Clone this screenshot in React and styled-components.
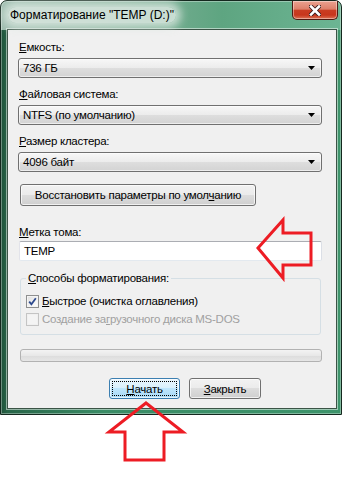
import styled, { createGlobalStyle } from 'styled-components';

const GlobalStyle = createGlobalStyle`
  html, body {
    margin: 0;
    padding: 0;
    background: #fff;
  }
  body {
    font-family: "Liberation Sans", Arial, sans-serif;
    font-size: 12px;
    color: #000;
  }
`;

const Page = styled.div`
  position: relative;
  width: 344px;
  height: 480px;
  overflow: hidden;
`;

const Window = styled.div`
  width: 342px;
  box-sizing: border-box;
  border: 1px solid #14281e;
  border-radius: 7px 7px 0 0;
  padding: 0 4px 5px 6px;
  background:
    linear-gradient(to right, #9dbcae 0%, #82b099 35%, #5ea581 65%, #6cb593 100%) 0 0 / 100% 29px no-repeat,
    linear-gradient(to right, #1f523a 0, #286548 7px, #3a8c66 30%, #3d946b 100%);
  box-shadow: inset 0 0 0 1px rgba(255, 255, 255, 0.35);
`;

const TitleBar = styled.div`
  height: 28px;
  display: flex;
  align-items: flex-start;
`;

const Title = styled.span`
  align-self: center;
  margin-left: 1px;
  padding: 0 2px;
  line-height: 16px;
  color: #000;
  border-radius: 8px;
  background: rgba(222, 234, 228, 0.8);
  box-shadow: 0 0 8px 5px rgba(222, 234, 228, 0.8);
`;

const CloseButton = styled.div`
  margin-left: auto;
  margin-right: -1px;
  width: 46px;
  height: 19px;
  box-sizing: border-box;
  border: 1px solid #4e1a12;
  border-top: none;
  border-radius: 0 0 5px 5px;
  background: linear-gradient(#eaa290 0%, #dd806a 45%, #c93d22 52%, #c7361c 78%, #dc7255 100%);
  box-shadow: inset 0 0 0 1px rgba(255, 255, 255, 0.4);
  display: flex;
  align-items: center;
  justify-content: center;
`;

const Client = styled.div`
  background: #f0f0f0;
  border: 1px solid #3b5446;
  box-shadow: 0 0 0 1px rgba(255, 255, 255, 0.5);
  padding: 10px 14px 9px 10px;
  display: flex;
  flex-direction: column;
  font-size: 11.5px;
  letter-spacing: -0.25px;
`;

const Field = styled.div`
  display: flex;
  flex-direction: column;
  margin-top: ${p => p.$top || 0}px;
`;

const Label = styled.div`
  line-height: 15px;
  padding-left: 1px;
  margin-bottom: ${p => p.$gap ?? 3}px;
`;

const Key = styled.span`
  text-decoration: underline;
`;

const Combo = styled.div`
  height: 20px;
  box-sizing: border-box;
  border: 1px solid #707070;
  border-radius: 3px;
  background: linear-gradient(#f7f7f7 0%, #ececec 49%, #dedede 50%, #d3d3d3 100%);
  box-shadow: inset 0 0 0 1px rgba(255, 255, 255, 0.6);
  display: flex;
  align-items: center;
  justify-content: space-between;
  padding: 0 6px 0 4px;
`;

const TextInput = styled.div`
  height: 20px;
  width: 303px;
  margin-left: 1px;
  box-sizing: border-box;
  border: 1px solid;
  border-color: #abadb3 #dbdfe6 #e3e9ef #e2e3ea;
  border-radius: 2px;
  background: #fff;
  padding-left: 4px;
  display: flex;
  align-items: center;
`;

const Button = styled.button`
  height: ${p => p.$h || 21}px;
  width: ${p => p.$w}px;
  box-sizing: border-box;
  margin: 0;
  padding: 0;
  border: 1px solid ${p => (p.$default ? '#3c7fb1' : '#707070')};
  border-radius: 3px;
  background: ${p =>
    p.$default
      ? 'linear-gradient(#eaf6fd 0%, #d9f0fc 49%, #bee6fd 50%, #a7d9f5 100%)'
      : 'linear-gradient(#f2f2f2 0%, #ebebeb 49%, #dddddd 50%, #cfcfcf 100%)'};
  box-shadow: inset 0 0 0 1px rgba(255, 255, 255, 0.7);
  outline: ${p => (p.$default ? '1px dotted #000' : 'none')};
  outline-offset: -4px;
  font-family: "Liberation Sans", Arial, sans-serif;
  font-size: 11.5px;
  letter-spacing: -0.25px;
  color: #000;
`;

const ResetButton = styled(Button)`
  margin: 12px 0 0 2px;
`;

const Group = styled.fieldset`
  margin: 10px 1px 0 2px;
  padding: 6px 5px 6px 5px;
  border: 1px solid #d5dfe5;
  border-radius: 3px;
  min-width: 0;
`;

const Legend = styled.legend`
  padding: 0 2px;
  line-height: 15px;
`;

const CheckRow = styled.div`
  height: 18px;
  display: flex;
  align-items: center;
  gap: 3px;
  color: ${p => (p.$disabled ? '#a0a0a0' : '#000')};
`;

const Box = styled.span`
  width: 13px;
  height: 13px;
  box-sizing: border-box;
  border: 1px solid ${p => (p.$disabled ? '#c4c4c4' : '#8e8f8f')};
  background: ${p =>
    p.$disabled ? '#f4f4f4' : 'linear-gradient(135deg, #dcdcdc 0%, #f4f4f4 60%, #ffffff 100%)'};
  box-shadow: inset 0 0 0 1px ${p => (p.$disabled ? '#f0f0f0' : '#f4f4f4')};
  display: flex;
  align-items: center;
  justify-content: center;
`;

const Progress = styled.div`
  height: 13px;
  margin: 14px 0 0 2px;
  box-sizing: border-box;
  border: 1px solid #b2b2b2;
  border-radius: 3px;
  background: linear-gradient(#f3f3f3 0%, #e8e8e8 50%, #dcdcdc 51%, #e6e6e6 100%);
`;

const ButtonRow = styled.div`
  display: flex;
  gap: 9px;
  margin-top: 16px;
  padding-left: 91px;
`;

const Arrow = styled.svg`
  position: absolute;
  left: ${p => p.$x}px;
  top: ${p => p.$y}px;
  overflow: visible;
  pointer-events: none;
`;

const DropArrow = () => (
  <svg width="7" height="4" viewBox="0 0 7 4">
    <path d="M0 0H7L3.5 4Z" fill="#000" />
  </svg>
);

const ComboBox = ({ label, value, top }) => (
  <Field $top={top}>
    <Label>{label}</Label>
    <Combo>
      <span>{value}</span>
      <DropArrow />
    </Combo>
  </Field>
);

const CheckBox = ({ checked, disabled, children }) => (
  <CheckRow $disabled={disabled}>
    <Box $disabled={disabled}>
      {checked && (
        <svg width="9" height="9" viewBox="0 0 9 9">
          <path d="M1.2 4.6 L3.4 7.2 L7.8 1.2" fill="none" stroke="#2d4a8e" strokeWidth="1.8" />
        </svg>
      )}
    </Box>
    <span>{children}</span>
  </CheckRow>
);

export default function App() {
  return (
    <Page>
      <GlobalStyle />
      <Window>
        <TitleBar>
          <Title>Форматирование "TEMP (D:)"</Title>
          <CloseButton>
            <svg width="12" height="11" viewBox="0 0 12 11">
              <path d="M2 1.5 L10 9.5 M10 1.5 L2 9.5" stroke="#3a1a1a" strokeWidth="4.4" strokeLinecap="square" />
              <path d="M2 1.5 L10 9.5 M10 1.5 L2 9.5" stroke="#fff" strokeWidth="2.6" strokeLinecap="square" />
            </svg>
          </CloseButton>
        </TitleBar>
        <Client>
          <ComboBox label={<><Key>Е</Key>мкость:</>} value="736 ГБ" />
          <ComboBox label={<><Key>Ф</Key>айловая система:</>} value="NTFS (по умолчанию)" top={9} />
          <ComboBox label={<><Key>Р</Key>азмер кластера:</>} value="4096 байт" top={9} />
          <ResetButton $w={236} $h={22}>
            Восстановить параметры по умол<Key>ч</Key>анию
          </ResetButton>
          <Field $top={19}>
            <Label $gap={1}><Key>М</Key>етка тома:</Label>
            <TextInput>TEMP</TextInput>
          </Field>
          <Group>
            <Legend><Key>С</Key>пособы форматирования:</Legend>
            <CheckBox checked>
              <Key>Б</Key>ыстрое (очистка оглавления)
            </CheckBox>
            <CheckBox disabled>
              Создание за<Key>г</Key>рузочного диска MS-DOS
            </CheckBox>
          </Group>
          <Progress />
          <ButtonRow>
            <Button $w={71} $default>
              <Key>Н</Key>ачать
            </Button>
            <Button $w={72}>
              <Key>З</Key>акрыть
            </Button>
          </ButtonRow>
        </Client>
      </Window>

      <Arrow $x={254} $y={216} width="62" height="66" viewBox="0 0 62 66">
        <polygon
          points="4,32 29,4 29,17 57,17 57,49 29,49 29,62"
          fill="none"
          stroke="#ed1c24"
          strokeWidth="3"
        />
      </Arrow>
      <Arrow $x={105} $y={399} width="82" height="65" viewBox="0 0 82 65">
        <polygon
          points="41,4 78,33 59,33 59,61 20,61 20,33 4,33"
          fill="none"
          stroke="#ed1c24"
          strokeWidth="3"
        />
      </Arrow>
    </Page>
  );
}
